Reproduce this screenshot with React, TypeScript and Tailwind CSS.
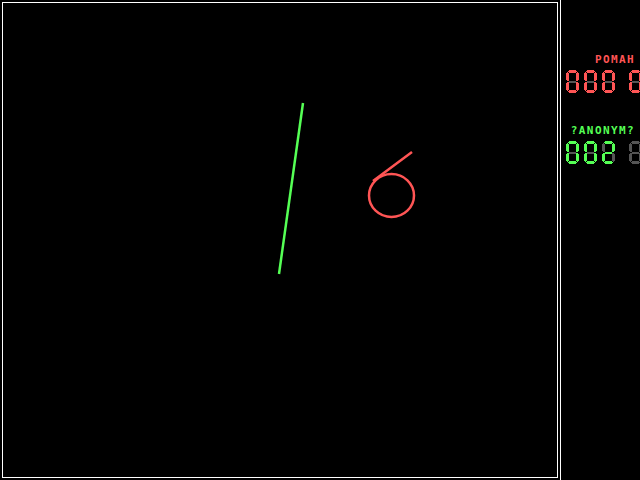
import React from 'react';

// segment order: a b c d e f g
const DIGITS: Record<string, number[]> = {
  '0': [1, 1, 1, 1, 1, 1, 0],
  '1': [0, 1, 1, 0, 0, 0, 0],
  '2': [1, 1, 0, 1, 1, 0, 1],
  ' ': [0, 0, 0, 0, 0, 0, 0],
};

const SEGS = [
  'M3,0 H10 V1 H11 V2 H10 V3 H3 V2 H2 V1 H3 Z',
  'M10,3 H11 V2 H12 V3 H13 V10 H12 V11 H10 Z',
  'M10,12 H12 V13 H13 V20 H12 V21 H11 V20 H10 Z',
  'M3,20 H10 V21 H11 V22 H10 V23 H3 V22 H2 V21 H3 Z',
  'M1,12 H3 V20 H2 V21 H1 V20 H0 V13 H1 Z',
  'M0,3 H1 V2 H2 V3 H3 V11 H1 V10 H0 Z',
  'M3,10.5 H10 V12.5 H3 Z',
];

function Digit({ d, on }: { d: string; on: string }) {
  const lit = DIGITS[d] ?? DIGITS[' '];
  return (
    <svg width="13" height="23" viewBox="0 0 13 23" className="shrink-0" shapeRendering="crispEdges">
      {SEGS.map((p, i) => (
        <path key={i} d={p} fill={lit[i] ? on : '#555555'} />
      ))}
    </svg>
  );
}

function Score({ value, color }: { value: string; color: string }) {
  return (
    <div className="flex pl-[5px]">
      <div className="flex gap-[5px]">
        <Digit d={value[0]} on={color} />
        <Digit d={value[1]} on={color} />
        <Digit d={value[2]} on={color} />
      </div>
      <div className="ml-[14px]">
        <Digit d={value[3]} on={color} />
      </div>
    </div>
  );
}

function Player({ name, score, color, textClass }: { name: string; score: string; color: string; textClass: string }) {
  return (
    <div className="flex flex-col">
      <div
        className={`text-right pr-[5px] text-[11px] leading-[11px] font-bold tracking-[1.4px] ${textClass}`}
        style={{ fontFamily: '"DejaVu Sans Mono", monospace' }}
      >
        {name}
      </div>
      <div className="mt-[5px]">
        <Score value={score} color={color} />
      </div>
    </div>
  );
}

export default function App() {
  return (
    <div className="w-[640px] h-[480px] bg-black flex overflow-hidden">
      <div className="w-[560px] h-full p-[2px] shrink-0">
        <div className="w-[556px] h-[476px] border border-white bg-black">
          <svg width="554" height="474" viewBox="3 3 554 474">
            <line x1="303" y1="103" x2="279" y2="274" stroke="#55ff55" strokeWidth="2.5" />
            <ellipse cx="391.5" cy="195.5" rx="22.5" ry="21.5" fill="none" stroke="#ff5555" strokeWidth="2.5" />
            <line x1="373" y1="181" x2="412" y2="152" stroke="#ff5555" strokeWidth="2.5" />
          </svg>
        </div>
      </div>
      <div className="w-px h-full bg-white shrink-0" />
      <div className="flex-1 h-full overflow-hidden flex flex-col pt-[54px] gap-[32px]">
        <Player name="POMAH" score="0000" color="#ff5555" textClass="text-[#ff5555]" />
        <Player name="?ANONYM?" score="002 " color="#55ff55" textClass="text-[#55ff55]" />
      </div>
    </div>
  );
}
